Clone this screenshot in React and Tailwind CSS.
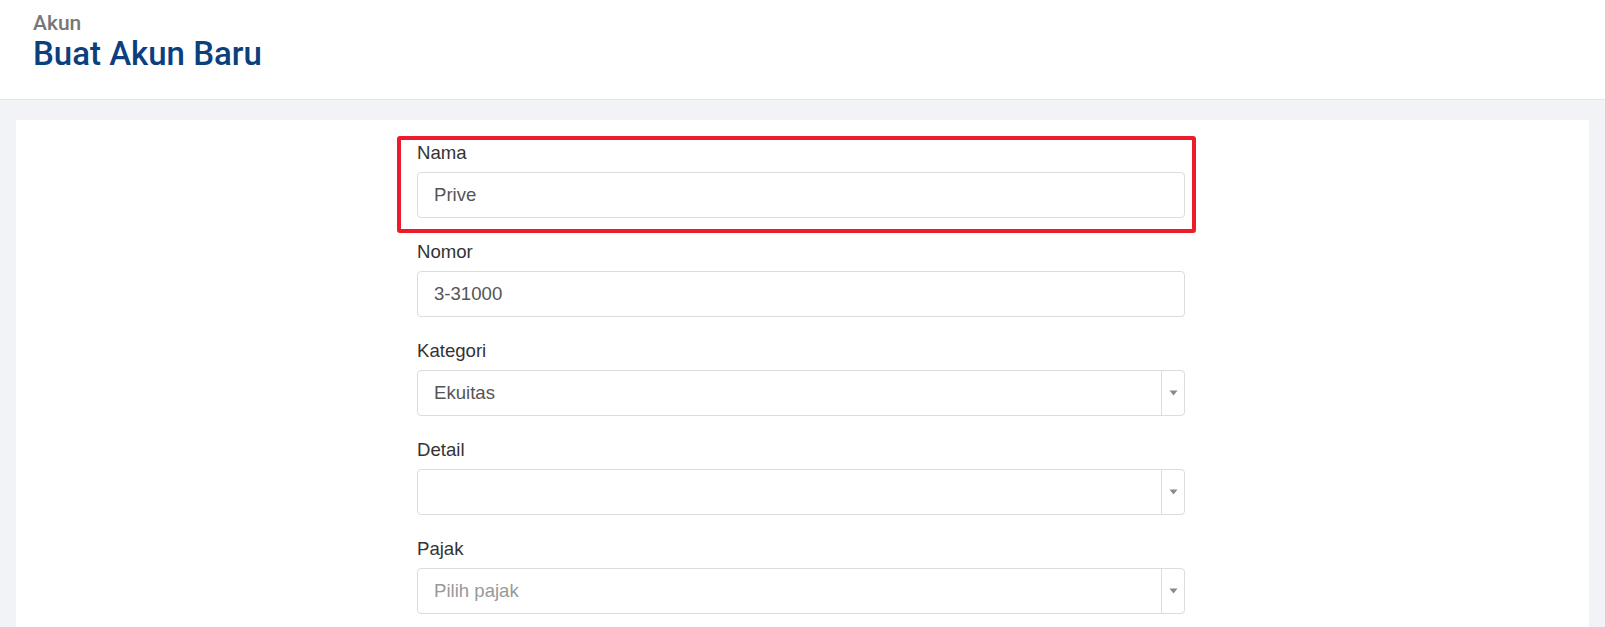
import React from "react";

function Caret() {
  return (
    <svg width="9" height="6" viewBox="0 0 9 6" className="block">
      <path d="M0.5 0.5 H8.5 L4.5 5.5 Z" fill="#8a8a8a" />
    </svg>
  );
}

function Field({ label, children, highlight }) {
  return (
    <div className="relative mb-[21px]">
      {highlight && (
        <div className="absolute left-[-20px] top-[-4px] right-[-11px] bottom-[-15px] border-[4px] border-[#ec1c2b] rounded-[3px] pointer-events-none" />
      )}
      <label className="block text-[18.6px] leading-[25px] text-[#333333] mb-[7px]">{label}</label>
      {children}
    </div>
  );
}

function TextInput({ value }) {
  return (
    <div className="h-[46px] flex items-center px-4 border border-[#dcdcdc] rounded-[4px] bg-white text-[18.6px] text-[#555555]">
      {value}
    </div>
  );
}

function SelectInput({ value, placeholder }) {
  return (
    <div className="h-[46px] flex items-stretch border border-[#dcdcdc] rounded-[4px] bg-white text-[18.6px]">
      <div className={"flex-1 flex items-center px-4 " + (value ? "text-[#555555]" : "text-[#999999]")}>
        {value || placeholder}
      </div>
      <div className="w-[23px] border-l border-[#dcdcdc] flex items-center justify-center">
        <Caret />
      </div>
    </div>
  );
}

export default function App() {
  return (
    <div className="min-h-screen bg-[#f2f3f7] flex flex-col" style={{ fontFamily: '"Liberation Sans", Arial, sans-serif' }}>
      <header className="h-[100px] bg-white border-b border-[#e3e4e8] pl-[33px] pt-[12px]" style={{ fontFamily: 'Roboto, "Liberation Sans", sans-serif' }}>
        <div className="text-[21px] leading-[23px] font-medium text-[#777777]">Akun</div>
        <h1 className="text-[33px] leading-[37px] font-medium text-[#0b3f7e]">Buat Akun Baru</h1>
      </header>
      <main className="flex-1 pt-5 px-4">
        <div className="bg-white h-full min-h-[507px] pt-5">
          <div className="w-[768px] ml-[401px]">
            <Field label="Nama" highlight>
              <TextInput value="Prive" />
            </Field>
            <Field label="Nomor">
              <TextInput value="3-31000" />
            </Field>
            <Field label="Kategori">
              <SelectInput value="Ekuitas" />
            </Field>
            <Field label="Detail">
              <SelectInput value="" />
            </Field>
            <Field label="Pajak">
              <SelectInput placeholder="Pilih pajak" />
            </Field>
          </div>
        </div>
      </main>
    </div>
  );
}
